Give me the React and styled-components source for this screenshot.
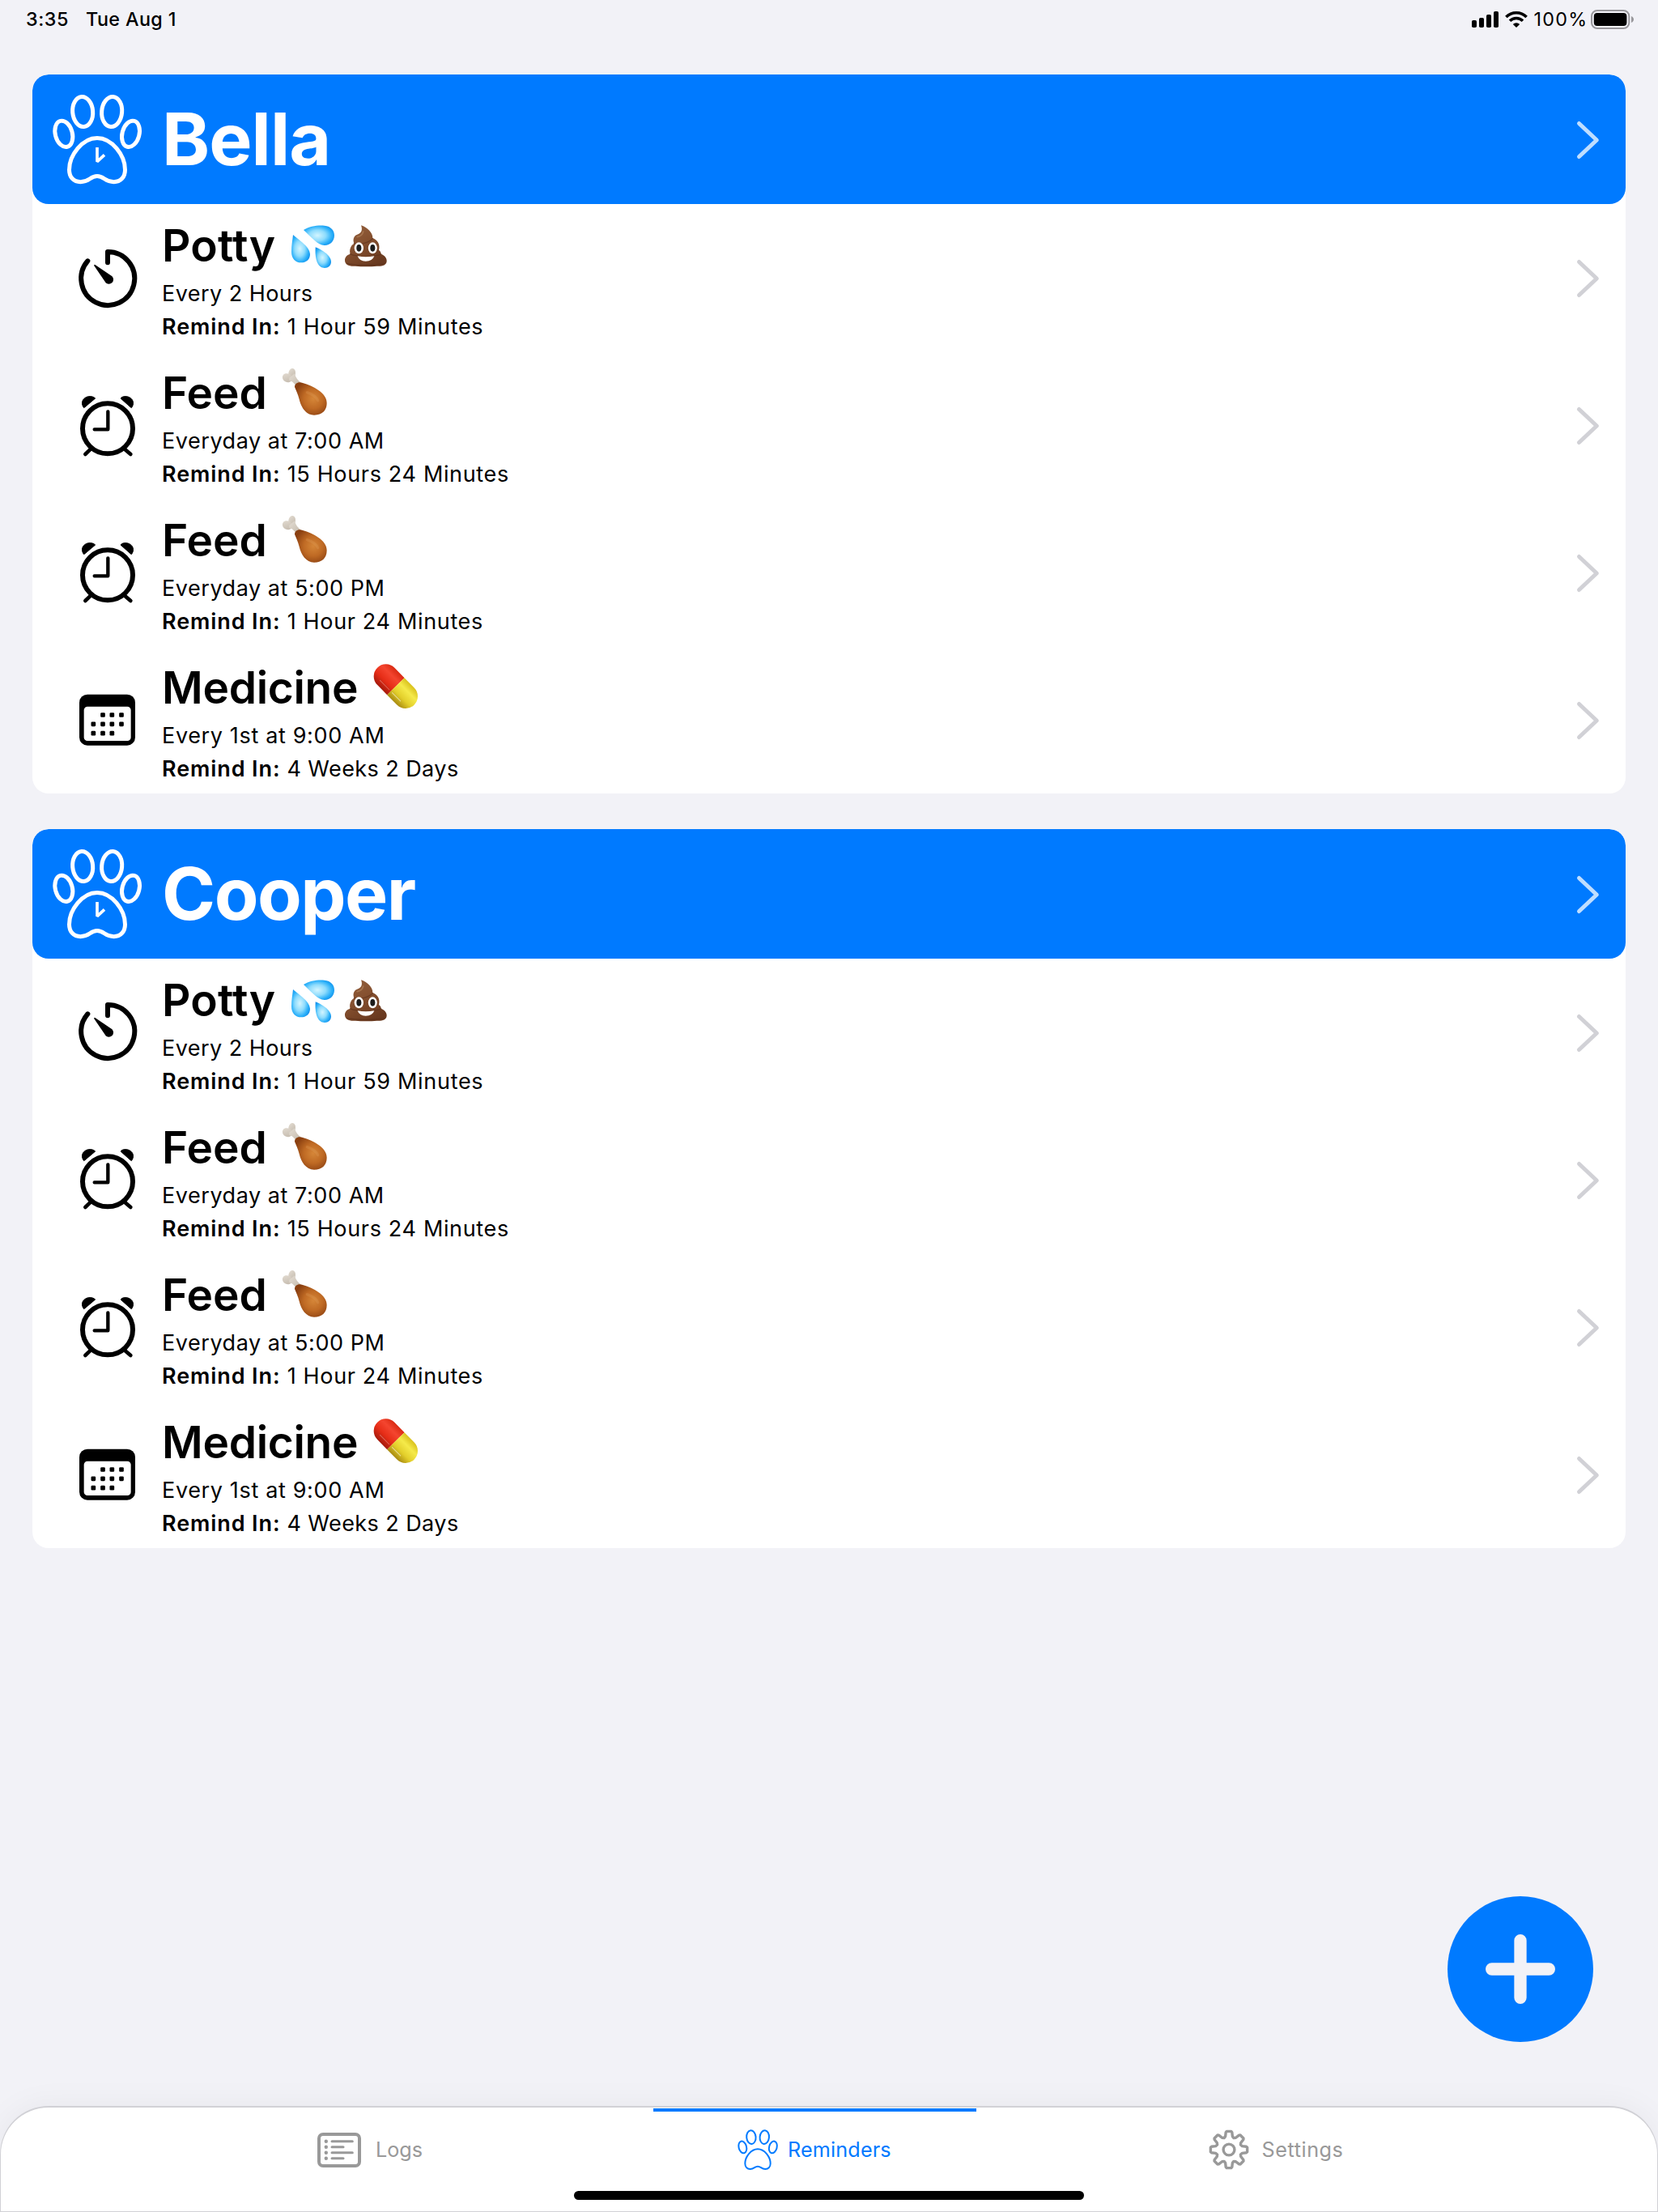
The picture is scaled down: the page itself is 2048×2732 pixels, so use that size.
import React from "react";
import styled, { createGlobalStyle } from "styled-components";

const GlobalStyle = createGlobalStyle`
  * { box-sizing: border-box; }
  body { margin: 0; background: #f2f2f7; }
`;

const BLUE = "#007aff";

const Screen = styled.div`
  position: relative;
  width: 2048px;
  height: 2732px;
  display: flex;
  flex-direction: column;
  overflow: hidden;
  background: #f2f2f7;
  color: #000;
  font-family: Inter, "Liberation Sans", sans-serif;
`;

const StatusBar = styled.header`
  flex: none;
  height: 92px;
  padding: 8px 30px 0 32px;
  display: flex;
  justify-content: space-between;
  align-items: flex-start;
  font-size: 23.3px;
  font-weight: 500;
  line-height: 32px;
`;

const StatusGroup = styled.div`
  display: flex;
  align-items: center;
  height: 32px;
`;

const StatusText = styled.span`
  letter-spacing: ${(p) => p.$track || 0}px;
  margin-left: ${(p) => p.$lead || 0}px;
  font-weight: ${(p) => p.$weight || 500};
  white-space: nowrap;
`;

const Glyph = styled.svg`
  display: block;
  flex: none;
  overflow: visible;
  margin-left: ${(p) => p.$lead || 0}px;
`;

const List = styled.main`
  flex: 1;
  padding: 0 40px;
  display: flex;
  flex-direction: column;
  gap: 44px;
`;

const Card = styled.section`
  flex: none;
  background: #fff;
  border-radius: 20px;
  overflow: hidden;
`;

const CardHeader = styled.div`
  height: 160px;
  padding: 0 33px 0 25px;
  display: flex;
  align-items: center;
  background: ${BLUE};
  color: #fff;
  border-radius: 20px;
`;

const DogName = styled.h1`
  flex: 1;
  margin: 0 0 0 25px;
  font-size: 89.4px;
  font-weight: 700;
  line-height: 158px;
  letter-spacing: ${(p) => p.$track}px;
`;

const Row = styled.div`
  height: 182px;
  padding: 0 33px 0 57px;
  display: flex;
  align-items: center;
`;

const IconSlot = styled.div`
  width: 72px;
  height: 76px;
  margin-right: 31px;
  margin-bottom: ${(p) => p.$raise || 0}px;
  display: flex;
  align-items: center;
  justify-content: center;
`;

const RowText = styled.div`
  flex: 1;
  align-self: flex-start;
  padding-top: 12px;
`;

const Title = styled.h2`
  margin: 0;
  height: 78px;
  display: flex;
  align-items: center;
  gap: 9px;
  font-size: 55px;
  font-weight: 600;
  line-height: 78px;
`;

const TitleText = styled.span`
  margin-right: 9.5px;
  letter-spacing: ${(p) => p.$track || 0}px;
`;

const Line = styled.p`
  margin: 0;
  font-size: 27px;
  line-height: 41px;
  white-space: nowrap;
  letter-spacing: ${(p) => p.$track || 0}px;
`;

const Label = styled.span`
  font-weight: 600;
  letter-spacing: 0.9px;
`;

const Disclosure = styled.span`
  flex: none;
  margin-top: 2px;
`;

const AddButton = styled.button`
  position: absolute;
  left: 1788px;
  top: 2342px;
  width: 180px;
  height: 180px;
  padding: 0;
  border: 0;
  border-radius: 50%;
  background: ${BLUE};
  display: flex;
  align-items: center;
  justify-content: center;
`;

const TabBar = styled.nav`
  position: relative;
  flex: none;
  height: 131px;
  padding-left: 256px;
  display: flex;
  background: #fff;
  border: 1px solid #d1d1d6;
  border-top-width: 2px;
  border-radius: 60px 60px 0 0;
  box-shadow: 0 0 40px rgba(0, 0, 0, 0.05);
`;

const Tab = styled.div`
  width: 399px;
  height: 98px;
  margin-top: 1px;
  margin-right: ${(p) => p.$after || 0}px;
  padding-left: ${(p) => p.$lead}px;
  border-top: 4px solid ${(p) => (p.$active ? BLUE : "transparent")};
  display: flex;
  align-items: center;
  color: ${(p) => (p.$active ? BLUE : "#999")};
  font-size: 25.2px;
`;

const TabLabel = styled.span`
  margin-left: ${(p) => p.$lead}px;
  letter-spacing: ${(p) => p.$track || 0}px;
`;

const HomeIndicator = styled.div`
  position: absolute;
  left: 708px;
  bottom: 14px;
  width: 630px;
  height: 11px;
  border-radius: 6px;
  background: #000;
`;

function Paw({ size, clock, weight = 15 }) {
  return (
    <Glyph width={size} height={size} viewBox="0 0 330 330" fill="none" stroke="currentColor" strokeWidth={weight}>
      <ellipse cx="111.5" cy="63" rx="37.5" ry="55.5" transform="rotate(-5 111.5 63)" />
      <ellipse cx="219.5" cy="63" rx="37.5" ry="55.5" transform="rotate(5 219.5 63)" />
      <ellipse cx="41.5" cy="145" rx="31.5" ry="49.5" transform="rotate(-15 41.5 145)" />
      <ellipse cx="289.5" cy="145" rx="31.5" ry="49.5" transform="rotate(15 289.5 145)" />
      <path d="M165 160.5C110 160.5 61.5 225 61.5 278C61.5 305 78 323 103 323C138 323 138 301.5 165 301.5C192 301.5 192 323 227 323C252 323 268.5 305 268.5 278C268.5 225 220 160.5 165 160.5Z" />
      {clock && <path d="M165 195V248L192 223" strokeWidth="11" strokeLinejoin="bevel" />}
    </Glyph>
  );
}

function Chevron({ color }) {
  return (
    <Disclosure>
      <Glyph width="27" height="46" viewBox="0 0 27 46" fill="none" stroke={color} strokeWidth="5" strokeLinecap="round" strokeLinejoin="round">
        <path d="M2.5 2.5L24.3 23L2.5 43.5" />
      </Glyph>
    </Disclosure>
  );
}

function TimerIcon() {
  return (
    <Glyph width="72" height="72" viewBox="39 113 216 216" fill="none" stroke="#000" strokeWidth="18" strokeLinecap="round" strokeLinejoin="round">
      <path d="M147 162V122A99 99 0 1 1 73 156" />
      <path d="M99 172L141 234A14 14 0 1 0 162 215Z" fill="#000" strokeWidth="5" />
    </Glyph>
  );
}

function AlarmIcon() {
  return (
    <Glyph width="68" height="74" viewBox="45 656 204 222" fill="none" stroke="#000" strokeLinecap="round" strokeLinejoin="round" $lead={-1}>
      <circle cx="147" cy="777" r="93" strokeWidth="18" />
      <path d="M148 714V780H98" strokeWidth="13" />
      <path d="M84 853L64 872M210 853L232 872" strokeWidth="14" />
      <path d="M58 699C50 688 50 673 62 664C74 655 92 656 101 665L62 698Z" fill="#000" strokeWidth="3" />
      <path d="M236 699C244 688 244 673 232 664C220 655 202 656 195 665L232 698Z" fill="#000" strokeWidth="3" />
    </Glyph>
  );
}

const CALENDAR_DOTS = [
  [129, 217], [163, 217], [198, 217],
  [94, 251], [129, 251], [163, 251], [198, 251],
  [94, 285], [129, 285], [163, 285],
];

function CalendarIcon() {
  return (
    <Glyph width="69" height="63" viewBox="42 142 207 189" $lead={-1}>
      <rect x="42" y="141" width="207" height="189" rx="30" />
      <rect x="59" y="186" width="174" height="127" rx="13" fill="#fff" />
      {CALENDAR_DOTS.map(([x, y]) => (
        <rect key={`${x}-${y}`} x={x - 8.5} y={y - 8.5} width="17" height="17" rx="4" />
      ))}
    </Glyph>
  );
}

function DropletsEmoji() {
  return (
    <Glyph width="56" height="60" viewBox="825 9 168 180" role="img" aria-label="sweat droplets">
      <defs>
        <radialGradient id="drop" cx="0.45" cy="0.5" r="0.6">
          <stop offset="0" stopColor="#d3f5ff" />
          <stop offset="0.45" stopColor="#8edcfd" />
          <stop offset="0.8" stopColor="#27aef9" />
          <stop offset="1" stopColor="#1590ea" />
        </radialGradient>
      </defs>
      <g fill="url(#drop)">
        <path d="M873 42C895 28 925 24 950 26C975 28 988 45 987 64C986 85 970 100 950 99C925 98 905 72 873 42Z" />
        <path d="M834 60C845 72 897 102 897 132C897 152 882 163 864 163C842 163 828 147 828 122C828 100 832 80 834 60Z" />
        <path d="M917 106C935 112 975 135 975 160C975 175 964 183 951 183C930 183 914 162 917 106Z" />
      </g>
    </Glyph>
  );
}

function PoopEmoji() {
  return (
    <Glyph width="56" height="60" viewBox="1020 9 168 180" role="img" aria-label="pile of poo">
      <defs>
        <linearGradient id="poo" x1="0" y1="0" x2="0.6" y2="1">
          <stop offset="0" stopColor="#94623f" />
          <stop offset="0.5" stopColor="#85502f" />
          <stop offset="1" stopColor="#6a3a20" />
        </linearGradient>
      </defs>
      <path fill="url(#poo)" d="M1086 25C1108 32 1130 52 1129 72C1146 78 1158 95 1152 117C1158 121 1160 126 1160 131C1175 136 1182 148 1181 158C1180 172 1165 177 1145 176C1120 178 1090 178 1065 176C1040 178 1027 170 1026 156C1025 142 1035 134 1046 131C1042 118 1046 100 1060 92C1054 76 1060 62 1075 58C1088 52 1092 42 1086 25Z" />
      <g fill="none" stroke="#5b301a" strokeOpacity="0.6" strokeWidth="4" strokeLinecap="round">
        <path d="M1060 92C1080 97 1110 92 1129 74" />
        <path d="M1046 131C1056 137 1066 138 1078 136M1160 131C1152 137 1144 138 1134 136" />
        <path d="M1034 166C1070 174 1130 174 1172 166" />
      </g>
      <path d="M1072 68C1082 66 1092 58 1094 48" fill="none" stroke="#b08058" strokeWidth="5" strokeLinecap="round" opacity="0.7" />
      <ellipse cx="1078" cy="109" rx="17" ry="21" fill="#fff" />
      <ellipse cx="1129" cy="109" rx="16.5" ry="21" fill="#fff" />
      <ellipse cx="1078" cy="109" rx="9" ry="13" fill="#1c1c1c" />
      <ellipse cx="1129" cy="109" rx="9" ry="13" fill="#1c1c1c" />
      <path d="M1073 139Q1103 145 1135 139Q1128 158 1103 158Q1080 158 1073 139Z" fill="#fff" />
    </Glyph>
  );
}

function DrumstickEmoji() {
  return (
    <Glyph width="56" height="60" viewBox="790 555 168 180" role="img" aria-label="poultry leg">
      <defs>
        <radialGradient id="meat" cx="0.58" cy="0.5" r="0.6">
          <stop offset="0" stopColor="#d58638" />
          <stop offset="0.5" stopColor="#bf6a24" />
          <stop offset="1" stopColor="#8a3f10" />
        </radialGradient>
        <linearGradient id="bone" x1="0" y1="0" x2="1" y2="1">
          <stop offset="0" stopColor="#e4ddd3" />
          <stop offset="1" stopColor="#c2b8ab" />
        </linearGradient>
      </defs>
      <g fill="url(#bone)">
        <ellipse cx="828" cy="573" rx="13" ry="18" transform="rotate(10 828 573)" />
        <ellipse cx="811" cy="590" rx="19" ry="16" transform="rotate(25 811 590)" />
        <path d="M818 590L838 574C842 590 850 600 862 608L842 622C838 610 828 602 818 600Z" />
      </g>
      <path fill="url(#meat)" d="M838 624C838 610 852 602 868 609C905 620 957 645 957 683C957 712 938 728 910 728C880 728 862 700 855 670C850 650 844 638 838 624Z" />
      <path d="M884 644C902 650 918 660 924 674" fill="none" stroke="#eab070" strokeOpacity="0.2" strokeWidth="10" strokeLinecap="round" />
    </Glyph>
  );
}

function PillEmoji() {
  return (
    <Glyph width="56" height="60" viewBox="1129 26 168 180" role="img" aria-label="pill">
      <defs>
        <linearGradient id="pillRed" x1="0" y1="0" x2="0" y2="1">
          <stop offset="0" stopColor="#d92a12" />
          <stop offset="0.3" stopColor="#f4452f" />
          <stop offset="0.65" stopColor="#e62d17" />
          <stop offset="1" stopColor="#a51a0c" />
        </linearGradient>
        <linearGradient id="pillYellow" x1="0" y1="0" x2="0" y2="1">
          <stop offset="0" stopColor="#d9c11c" />
          <stop offset="0.3" stopColor="#f5ea4a" />
          <stop offset="0.65" stopColor="#e3cf2b" />
          <stop offset="1" stopColor="#a88a10" />
        </linearGradient>
      </defs>
      <g transform="rotate(45.4 1212.5 112)">
        <path d="M1212.5 67H1160.5A45 45 0 0 0 1160.5 157H1212.5Z" fill="url(#pillRed)" />
        <path d="M1212.5 67H1264.5A45 45 0 0 1 1264.5 157H1212.5Z" fill="url(#pillYellow)" />
        <path d="M1156 138H1204" stroke="#fff" strokeOpacity="0.3" strokeWidth="3" strokeLinecap="round" />
        <path d="M1220 138H1264" stroke="#fff" strokeOpacity="0.55" strokeWidth="3" strokeLinecap="round" />
      </g>
    </Glyph>
  );
}

function LogsIcon() {
  return (
    <Glyph width="54" height="43" viewBox="0 0 54 43" fill="none" stroke="currentColor" strokeLinecap="round">
      <rect x="2" y="2" width="50" height="39" rx="5" strokeWidth="4" />
      {[10.7, 17.7, 24.7, 31.7].map((y, i) => (
        <g key={y} strokeWidth="3">
          <circle cx="10.8" cy={y} r="2.2" fill="currentColor" stroke="none" />
          <path d={`M18 ${y}H${i % 2 ? 32 : 43.3}`} />
        </g>
      ))}
    </Glyph>
  );
}

const point = (r, deg) => {
  const a = ((deg - 90) * Math.PI) / 180;
  return `${(r * Math.cos(a)).toFixed(2)} ${(r * Math.sin(a)).toFixed(2)}`;
};

const GEAR_PATH =
  "M" +
  Array.from({ length: 8 }, (_, i) => i * 45)
    .map((t) => [point(21.8, t - 10), point(22.8, t - 7), point(22.8, t + 7), point(21.8, t + 10), point(17, t + 15), point(15.6, t + 22.5), point(17, t + 30)].join("L"))
    .join("L") +
  "Z";

function GearIcon() {
  return (
    <Glyph width="50" height="50" viewBox="-25 -25 50 50" fill="none" stroke="currentColor" strokeWidth="3.4" strokeLinejoin="round">
      <path d={GEAR_PATH} />
      <circle r="6.9" />
    </Glyph>
  );
}

function SignalIcon() {
  return (
    <Glyph width="33" height="20" viewBox="0 0 33 20">
      <rect x="0" y="11" width="6" height="9" rx="1.8" />
      <rect x="9" y="8" width="6" height="12" rx="1.8" />
      <rect x="18" y="4" width="6" height="16" rx="1.8" />
      <rect x="27" y="0" width="6" height="20" rx="1.8" />
    </Glyph>
  );
}

function WifiIcon() {
  return (
    <Glyph width="28" height="20" viewBox="0 0 28 20" fill="none" stroke="#000" strokeWidth="3.6" $lead={8}>
      <path d="M1.4 7A17.8 17.8 0 0 1 26.6 7" />
      <path d="M6 11.8A11.3 11.3 0 0 1 22 11.8" />
      <path d="M14 20L9.8 16A6 6 0 0 1 18.2 16Z" fill="#000" stroke="none" />
    </Glyph>
  );
}

function BatteryIcon() {
  return (
    <Glyph width="53" height="24" viewBox="0 0 53 24" $lead={3.5}>
      <rect x="1" y="1" width="46.3" height="22" rx="7" fill="none" stroke="#98979b" strokeWidth="2" />
      <rect x="3.8" y="4" width="40.6" height="16" rx="4" />
      <path d="M50 8C54 9.5 54 14.5 50 16Z" fill="#98979b" />
    </Glyph>
  );
}

const REMINDERS = [
  { icon: TimerIcon, title: "Potty", emojis: [DropletsEmoji, PoopEmoji], schedule: "Every 2 Hours", due: "1 Hour 59 Minutes", tracks: [0.25, 0.45, 0.7] },
  { icon: AlarmIcon, title: "Feed", emojis: [DrumstickEmoji], schedule: "Everyday at 7:00 AM", due: "15 Hours 24 Minutes", tracks: [0, 0.55, 0.66] },
  { icon: AlarmIcon, title: "Feed", emojis: [DrumstickEmoji], schedule: "Everyday at 5:00 PM", due: "1 Hour 24 Minutes", tracks: [0, 0.55, 0.66] },
  { icon: CalendarIcon, title: "Medicine", emojis: [PillEmoji], schedule: "Every 1st at 9:00 AM", due: "4 Weeks 2 Days", tracks: [-0.3, 0.65, 0.43] },
];

function DogCard({ name, track, raises }) {
  return (
    <Card>
      <CardHeader>
        <Paw size={110} clock />
        <DogName $track={track}>{name}</DogName>
        <Chevron color="#bfdeff" />
      </CardHeader>
      {REMINDERS.map(({ icon: Icon, title, emojis, schedule, due, tracks }, i) => (
        <Row key={schedule}>
          <IconSlot $raise={raises[i]}><Icon /></IconSlot>
          <RowText>
            <Title>
              <TitleText $track={tracks[0]}>{title}</TitleText>
              {emojis.map((Emoji, n) => <Emoji key={n} />)}
            </Title>
            <Line $track={tracks[1]}>{schedule}</Line>
            <Line $track={tracks[2]}><Label>Remind In:</Label> {due}</Line>
          </RowText>
          <Chevron color="#d1d1d6" />
        </Row>
      ))}
    </Card>
  );
}

export default function App() {
  return (
    <Screen>
      <GlobalStyle />
      <StatusBar>
        <StatusGroup>
          <StatusText $track={0.6}>3:35</StatusText>
          <StatusText $lead={21} $track={0.38}>Tue Aug 1</StatusText>
        </StatusGroup>
        <StatusGroup>
          <SignalIcon />
          <WifiIcon />
          <StatusText $lead={8} $weight={400} $track={1.3}>100%</StatusText>
          <BatteryIcon />
        </StatusGroup>
      </StatusBar>
      <List>
        <DogCard name="Bella" track={-0.9} raises={[-2, -1, 0, 0]} />
        <DogCard name="Cooper" track={-1.5} raises={[3, 3, 1, 0]} />
      </List>
      <TabBar>
        <Tab $lead={135} $after={151}>
          <LogsIcon />
          <TabLabel $lead={18}>Logs</TabLabel>
        </Tab>
        <Tab $lead={104} $after={170} $active>
          <Paw size={50} weight={13} />
          <TabLabel $lead={12} $track={0.15}>Reminders</TabLabel>
        </Tab>
        <Tab $lead={117}>
          <GearIcon />
          <TabLabel $lead={15.6} $track={0.55}>Settings</TabLabel>
        </Tab>
        <HomeIndicator />
      </TabBar>
      <AddButton aria-label="Add reminder">
        <Glyph width="86" height="86" viewBox="0 0 86 86" stroke="#f2f2f7" strokeWidth="15.3" strokeLinecap="round">
          <path d="M43 7.65V78.35M7.65 43H78.35" />
        </Glyph>
      </AddButton>
    </Screen>
  );
}
